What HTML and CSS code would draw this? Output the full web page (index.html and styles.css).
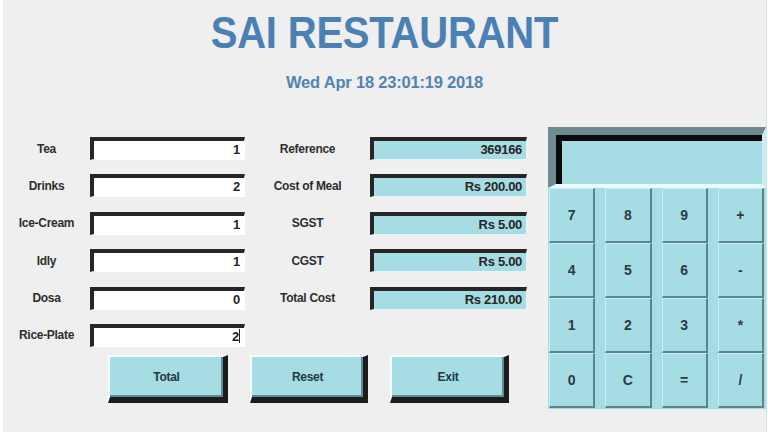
FILE: index.html
```html
<!DOCTYPE html>
<html>
<head>
<meta charset="utf-8">
<link rel="stylesheet" href="styles.css">
</head>
<body>
<div class="app">
  <header class="header">
    <div class="title">SAI RESTAURANT</div>
    <div class="date">Wed Apr 18 23:01:19 2018</div>
  </header>
  <div class="main">
    <div class="left">
      <div class="form">
        <div class="lbl">Tea</div><div class="entry">1</div>
        <div class="lbl">Reference</div><div class="entry blue">369166</div>
        <div class="lbl">Drinks</div><div class="entry">2</div>
        <div class="lbl">Cost of Meal</div><div class="entry blue">Rs 200.00</div>
        <div class="lbl">Ice-Cream</div><div class="entry">1</div>
        <div class="lbl">SGST</div><div class="entry blue">Rs 5.00</div>
        <div class="lbl">Idly</div><div class="entry">1</div>
        <div class="lbl">CGST</div><div class="entry blue">Rs 5.00</div>
        <div class="lbl">Dosa</div><div class="entry">0</div>
        <div class="lbl">Total Cost</div><div class="entry blue">Rs 210.00</div>
        <div class="lbl">Rice-Plate</div><div class="entry">2<span class="caret"></span></div>
      </div>
      <div class="actions">
        <div class="btn w120">Total</div>
        <div class="btn w118">Reset</div>
        <div class="btn w119">Exit</div>
      </div>
    </div>
    <div class="calc">
      <div class="display"></div>
      <div class="keys">
        <div class="key">7</div><div class="key">8</div><div class="key">9</div><div class="key">+</div>
        <div class="key">4</div><div class="key">5</div><div class="key">6</div><div class="key">-</div>
        <div class="key">1</div><div class="key">2</div><div class="key">3</div><div class="key">*</div>
        <div class="key">0</div><div class="key">C</div><div class="key">=</div><div class="key">/</div>
      </div>
    </div>
  </div>
</div>
</body>
</html>
```
FILE: styles.css
```css
html, body {
  margin: 0;
  padding: 0;
  background: #ffffff;
}
body {
  font-family: "Liberation Sans", Arial, sans-serif;
  font-weight: bold;
}
.app {
  width: 764px;
  height: 432px;
  margin-left: 3px;
  background: #efefef;
  border-right: 1px solid #cfe3e8;
  box-sizing: border-box;
  display: flex;
  flex-direction: column;
}
.header {
  height: 127px;
  text-align: center;
  padding-top: 10px;
  box-sizing: border-box;
}
.title {
  display: inline-block;
  font-size: 40px;
  line-height: 44px;
  color: #4a80b3;
  letter-spacing: -0.2px;
  transform: scaleY(1.13);
}
.date {
  margin-top: 18px;
  font-size: 16.5px;
  line-height: 20px;
  color: #5283b3;
  letter-spacing: -0.2px;
}
.main {
  display: flex;
  gap: 21px;
}
.left {
  width: 524px;
  display: flex;
  flex-direction: column;
}
.form {
  padding-top: 10px;
  display: grid;
  grid-template-columns: 87px 155px 125px 157px;
  grid-auto-rows: 23px;
  row-gap: 14.4px;
  align-items: center;
}
.lbl {
  text-align: center;
  font-size: 12px;
  color: #2e2e2e;
  letter-spacing: -0.3px;
}
.entry {
  height: 23px;
  box-sizing: border-box;
  background: #ffffff;
  border-top: 4px solid #262626;
  border-left: 4px solid #262626;
  border-right: 1px solid #ffffff;
  border-bottom: 1px solid #ffffff;
  text-align: right;
  padding-right: 4px;
  font-size: 13px;
  line-height: 17px;
  color: #262626;
  letter-spacing: -0.3px;
}
.entry.blue {
  background: #a6dce3;
  border-right-color: #e6f7f9;
  border-bottom-color: #e6f7f9;
}
.caret {
  display: inline-block;
  width: 1px;
  height: 14px;
  background: #222;
  vertical-align: -2px;
}
.actions {
  margin-top: 8px;
  padding-left: 105px;
  display: flex;
  gap: 22px;
}
.btn {
  height: 48px;
  box-sizing: border-box;
  background: #a6dce3;
  border-top: 2px solid #f2feff;
  border-left: 2px solid #f2feff;
  border-right: 5px solid #1c1c1c;
  border-bottom: 6px solid #1c1c1c;
  box-shadow: inset -2px -2px 0 #5f8b92;
  display: flex;
  align-items: center;
  justify-content: center;
  font-size: 12px;
  color: #1f3a44;
  letter-spacing: -0.3px;
}
.w120 { width: 120px; }
.w118 { width: 118px; }
.w119 { width: 119px; }
.calc {
  width: 218px;
  height: 282px;
  background: #a6dce3;
  display: flex;
  flex-direction: column;
}
.display {
  height: 61px;
  box-sizing: border-box;
  border-top: 8px solid #6f8b91;
  border-left: 8px solid #6f8b91;
  border-bottom: 4px solid #eafbfd;
  border-right: 4px solid #c9eef2;
  box-shadow: inset 6px 6px 0 #0a0a0a;
  background: #a6dce3;
}
.keys {
  display: grid;
  grid-template-columns: repeat(4, 1fr);
  grid-auto-rows: 55px;
  column-gap: 10px;
  padding: 0 2px 0 1px;
}
.key {
  box-sizing: border-box;
  background: #a6dce3;
  border-top: 1px solid #c6eef3;
  border-left: 1px solid #c6eef3;
  border-right: 2px solid #5a858c;
  border-bottom: 2px solid #5a858c;
  display: flex;
  align-items: center;
  justify-content: center;
  font-size: 14px;
  color: #2a3c42;
}
```
